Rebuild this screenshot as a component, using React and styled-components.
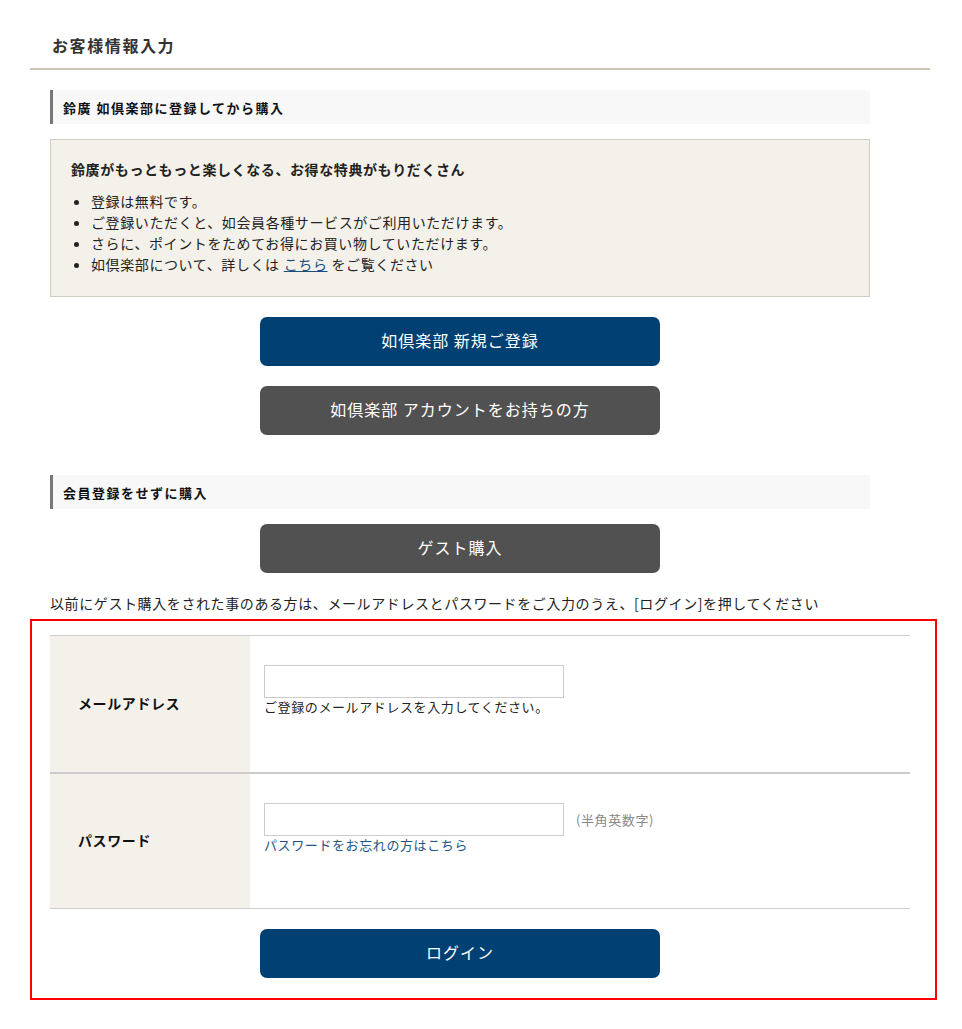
import React from 'react';
import styled, { createGlobalStyle } from 'styled-components';

const GlobalStyle = createGlobalStyle`
  body {
    margin: 0;
    background: #fff;
    color: #222;
    font-family: "Noto Sans CJK JP", "Noto Sans", sans-serif;
    font-size: 14px;
    letter-spacing: 0.6px;
  }
`;

const Page = styled.div`
  width: 900px;
  padding: 30px 0 30px 30px;
`;

const Title = styled.h1`
  margin: 0;
  padding: 0 0 8px 22px;
  font-size: 16px;
  font-weight: bold;
  letter-spacing: 1.6px;
  color: #333;
  line-height: 30px;
  border-bottom: 2px solid #c9c6b9;
`;

const Section = styled.section`
  padding: ${(p) => p.top}px 0 0 20px;
  width: 820px;
`;

const SectionHead = styled.h2`
  margin: 0;
  height: 34px;
  display: flex;
  align-items: center;
  padding-left: 10px;
  background: #f8f8f8;
  border-left: 3px solid #777;
  font-size: 13px;
  font-weight: bold;
  letter-spacing: 1.5px;
  color: #111;
`;

const InfoBox = styled.div`
  margin-top: 15px;
  background: #f4f1ea;
  border: 1px solid #cfccc4;
  padding: 18px 20px 21px 20px;
`;

const InfoTitle = styled.p`
  margin: 0 0 11px;
  font-weight: bold;
  font-size: 14px;
  line-height: 22px;
`;

const List = styled.ul`
  margin: 0;
  padding-left: 20px;
  li {
    line-height: 21px;
    font-size: 14px;
  }
  a {
    color: #1d4f7a;
    margin: 0 4px;
  }
`;

const Buttons = styled.div`
  display: flex;
  flex-direction: column;
  align-items: center;
  gap: 20px;
  margin-top: ${(p) => p.top}px;
`;

const Button = styled.button`
  width: 400px;
  height: 49px;
  padding: 0 0 3px;
  border: none;
  border-radius: 7px;
  background: ${(p) => (p.dark ? '#515151' : '#004073')};
  color: #fff;
  font-family: inherit;
  font-size: 16px;
  letter-spacing: 1px;
  cursor: pointer;
`;

const Note = styled.p`
  margin: 20px 0 0 20px;
  line-height: 20px;
  font-size: 14px;
`;

const LoginBox = styled.div`
  margin-top: 6px;
  width: 867px;
  border: 2px solid #ff0000;
  padding: 14px 18px 20px 18px;
`;

const Table = styled.div`
  width: 860px;
  border-top: 1px solid #cccccc;
  border-bottom: 1px solid #cccccc;
`;

const Row = styled.div`
  display: grid;
  grid-template-columns: 200px 1fr;
  height: ${(p) => p.h}px;
  & + & {
    border-top: 2px solid #cccccc;
  }
`;

const Label = styled.div`
  background: #f4f1ea;
  display: flex;
  align-items: center;
  padding: 0 0 2px 28px;
  font-weight: bold;
  font-size: 14px;
  color: #111;
`;

const Field = styled.div`
  padding: 29px 0 0 14px;
`;

const InputLine = styled.div`
  display: flex;
  align-items: center;
  gap: 12px;
`;

const Input = styled.input`
  width: 300px;
  height: 33px;
  box-sizing: border-box;
  border: 1px solid #cccccc;
  padding: 0 6px;
  font-family: inherit;
  font-size: 14px;
`;

const Hint = styled.div`
  font-size: 13px;
  line-height: 18px;
  color: #222;
`;

const Muted = styled.span`
  font-size: 13px;
  color: #888;
`;

const ForgotLink = styled.a`
  display: block;
  font-size: 13px;
  line-height: 18px;
  color: #1d5585;
  text-decoration: none;
`;

const LoginFoot = styled.div`
  display: flex;
  justify-content: center;
  padding: 20px 0 0 0;
  width: 820px;
`;

export default function App() {
  return (
    <>
      <GlobalStyle />
      <Page>
        <Title>お客様情報入力</Title>

        <Section top={20}>
          <SectionHead>鈴廣 如倶楽部に登録してから購入</SectionHead>
          <InfoBox>
            <InfoTitle>鈴廣がもっともっと楽しくなる、お得な特典がもりだくさん</InfoTitle>
            <List>
              <li>登録は無料です。</li>
              <li>ご登録いただくと、如会員各種サービスがご利用いただけます。</li>
              <li>さらに、ポイントをためてお得にお買い物していただけます。</li>
              <li>
                如倶楽部について、詳しくは<a href="#">こちら</a>をご覧ください
              </li>
            </List>
          </InfoBox>
          <Buttons top={20}>
            <Button>如倶楽部 新規ご登録</Button>
            <Button dark>如倶楽部 アカウントをお持ちの方</Button>
          </Buttons>
        </Section>

        <Section top={40}>
          <SectionHead>会員登録をせずに購入</SectionHead>
          <Buttons top={15}>
            <Button dark>ゲスト購入</Button>
          </Buttons>
        </Section>

        <Note>以前にゲスト購入をされた事のある方は、メールアドレスとパスワードをご入力のうえ、[ログイン]を押してください</Note>

        <LoginBox>
          <Table>
            <Row h={136}>
              <Label>メールアドレス</Label>
              <Field>
                <Input type="text" />
                <Hint>ご登録のメールアドレスを入力してください。</Hint>
              </Field>
            </Row>
            <Row h={134}>
              <Label>パスワード</Label>
              <Field>
                <InputLine>
                  <Input type="password" />
                  <Muted>(半角英数字)</Muted>
                </InputLine>
                <ForgotLink href="#">パスワードをお忘れの方はこちら</ForgotLink>
              </Field>
            </Row>
          </Table>
          <LoginFoot>
            <Button>ログイン</Button>
          </LoginFoot>
        </LoginBox>
      </Page>
    </>
  );
}
